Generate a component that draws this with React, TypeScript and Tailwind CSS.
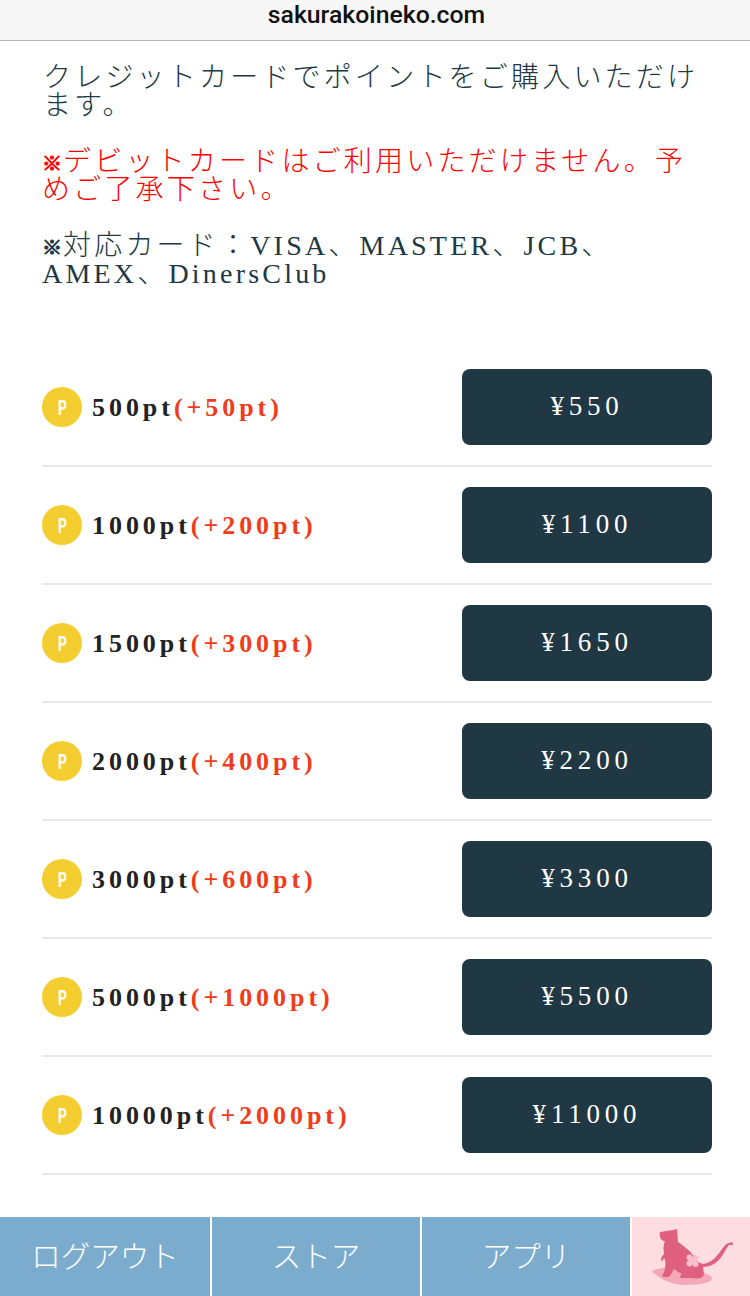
const serif = "font-['Liberation_Serif','Noto_Sans_CJK_JP',serif]";

const plans = [
  { pt: '500pt', bonus: '(+50pt)', price: '¥550' },
  { pt: '1000pt', bonus: '(+200pt)', price: '¥1100' },
  { pt: '1500pt', bonus: '(+300pt)', price: '¥1650' },
  { pt: '2000pt', bonus: '(+400pt)', price: '¥2200' },
  { pt: '3000pt', bonus: '(+600pt)', price: '¥3300' },
  { pt: '5000pt', bonus: '(+1000pt)', price: '¥5500' },
  { pt: '10000pt', bonus: '(+2000pt)', price: '¥11000' },
];

function CatLogo() {
  return (
    <svg viewBox="0 0 118 79" className="w-[118px] h-[79px]">
      <path d="M20 54 C30 49 50 50 62 54 C72 55 80 58 80 62 C78 67 62 68 50 68 C38 67 24 60 20 54Z" fill="#f4a9b8" />
      <path
        d="M28 15 L41 13 L45 12 L46 25 C52 29 60 35 66 45 L71 47 C80 46 86 38 90 32 C93 28 95 26 97 26 L100 25 L101 27 L101 28 L97 28 C95 30 93 34 90 39 C85 47 77 50 71 50 L72 57 C71 62 65 62 60 61 L50 61 C47 61 48 58 50 57 L46 55 L42 52 L38 59 C36 61 31 60 30 59 C33 54 34 50 33 43 L32 41 C31 44 29 45 29 43 C29 40 31 38 32 37 C31 30 32 26 33 24 C29 24 27 20 28 15Z"
        fill="#e0607f"
      />
      <g fill="#f9c0cc">
        <ellipse cx="57.5" cy="40.5" rx="3" ry="3" />
        <ellipse cx="63.5" cy="41" rx="3" ry="3" />
        <ellipse cx="57.5" cy="46.5" rx="3" ry="3" />
        <ellipse cx="63.5" cy="47" rx="3" ry="3" />
        <ellipse cx="60.5" cy="44" rx="3" ry="3" />
      </g>
    </svg>
  );
}

function Mark() {
  return <span className="text-[20px] leading-none font-bold tracking-[1px] [-webkit-text-stroke:1px_currentColor]">※</span>;
}

export default function App() {
  return (
    <div className={`flex flex-col w-[750px] h-[1296px] bg-white overflow-hidden ${serif}`}>
      <header className="h-[41px] shrink-0 pl-[3px] bg-[#f7f7f7] border-b border-[#b2b2b2] flex justify-center font-['Roboto',sans-serif] font-medium text-[24.8px] leading-[30px] text-[#111]">
        sakurakoineko.com
      </header>

      <div className="px-[42px] pt-[23px] text-[28px] leading-[28px] tracking-[3.2px] text-[#203744] font-light">
        <p className="pl-[1px]">クレジットカードでポイントをご購入いただけます。</p>
        <p className="mt-[28px] text-[#ff0000]">
          <Mark />デビットカードはご利用いただけません。予めご了承下さい。
        </p>
        <p className="mt-[28px]">
          <Mark />対応カード：VISA、MASTER、JCB、AMEX、DinersClub
        </p>
      </div>

      <ul className="mx-[38px] mt-[61px] pl-[4px]">
        {plans.map((p) => (
          <li key={p.pt} className="flex items-center justify-between h-[118px] border-b-2 border-[#e8e8e8]">
            <div className="flex items-center gap-[10px]">
              <span className="w-10 h-10 rounded-full bg-[#f4ce30] flex items-center justify-center text-white font-bold text-[22px] font-['Liberation_Sans',sans-serif]">
                <span className="scale-x-[0.6]">P</span>
              </span>
              <span className="text-[26px] font-bold tracking-[3.95px] text-[#222]">
                {p.pt}
                <span className="text-[#f03c1a]">{p.bonus}</span>
              </span>
            </div>
            <button className="w-[250px] h-[76px] pb-[2px] rounded-lg bg-[#203744] text-white text-[27px] tracking-[4.8px]">
              {p.price}
            </button>
          </li>
        ))}
      </ul>

      <nav className="mt-auto h-[79px] shrink-0 flex gap-[2px] text-white text-[29.5px] font-['Noto_Sans_CJK_JP',sans-serif] font-light">
        <a className="w-[210px] pb-[4px] bg-[#7bacce] flex items-center justify-center">ログアウト</a>
        <a className="w-[208px] pb-[4px] bg-[#7bacce] flex items-center justify-center">ストア</a>
        <a className="w-[208px] pb-[4px] bg-[#7bacce] flex items-center justify-center">アプリ</a>
        <a className="flex-1 bg-[#fddde0] flex items-center justify-center">
          <CatLogo />
        </a>
      </nav>
    </div>
  );
}
